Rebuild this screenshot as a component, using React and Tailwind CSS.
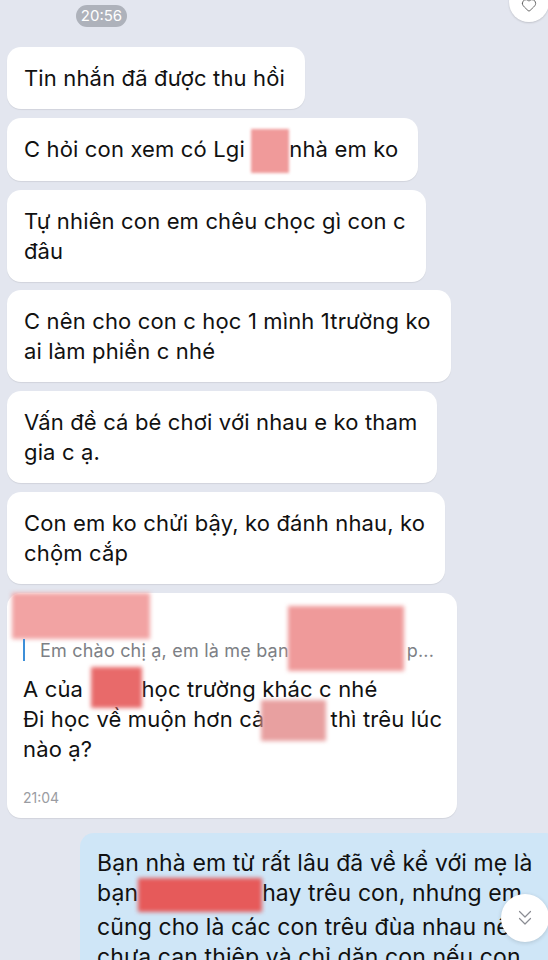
import React from "react";
import { Heart } from "lucide-react";

function Redact({ w, h, className = "", color = "bg-[#f09a9a]" }) {
  return (
    <span
      className={`inline-block align-middle ${color} blur-[1.5px] ${className}`}
      style={{ width: w, height: h }}
    />
  );
}

function Bubble({ children, className = "" }) {
  return (
    <div
      className={`w-fit rounded-[14px] bg-white pl-[17px] pr-[20px] py-[16px] text-[22px] leading-[30px] tracking-[0.15px] text-[#111] shadow-[0_1px_1px_rgba(0,0,0,0.08)] ${className}`}
    >
      {children}
    </div>
  );
}

export default function App() {
  return (
    <div
      className="relative h-[960px] w-[548px] overflow-hidden bg-[#e3e6ef]"
      style={{ fontFamily: "Inter, 'Noto Sans', sans-serif" }}
    >
      {/* heart reaction */}
      <div className="absolute right-[-1px] top-[-18px] flex h-[40px] w-[40px] items-end justify-center rounded-full bg-white pb-[9px] shadow-[0_1px_2px_rgba(0,0,0,0.15)]">
        <Heart size={16} strokeWidth={1.3} className="text-[#555]" />
      </div>

      <div className="flex flex-col px-[7px]">
        <div className="ml-[69px] mt-[5px] flex h-[22px] w-[51px] items-center justify-center rounded-full bg-[#aeb2bb] text-[15px] text-white">
          20:56
        </div>

        <Bubble className="mt-[20px] text-[#5b5b5b]">Tin nhắn đã được thu hồi</Bubble>

        <Bubble className="mt-[9px]">
          C hỏi con xem có Lgi{" "}
          <Redact w={38} h={44} className="-my-[8px]" />
          nhà em ko
        </Bubble>

        <Bubble className="mt-[9px]">
          Tự nhiên con em chêu chọc gì con c
          <br />
          đâu
        </Bubble>

        <Bubble className="mt-[8px]">
          C nên cho con c học 1 mình 1trường ko
          <br />
          ai làm phiền c nhé
        </Bubble>

        <Bubble className="mt-[9px]">
          Vấn đề cá bé chơi với nhau e ko tham
          <br />
          gia c ạ.
        </Bubble>

        <Bubble className="mt-[9px]">
          Con em ko chửi bậy, ko đánh nhau, ko
          <br />
          chộm cắp
        </Bubble>

        {/* reply bubble */}
        <div className="mt-[9px] w-[450px] rounded-[14px] bg-white pb-[10px] pl-[16px] pr-[16px] shadow-[0_1px_1px_rgba(0,0,0,0.08)]">
          <div className="-ml-[11px] h-[46px] w-[138px] bg-[#f2a3a3] blur-[2px]" />
          <div className="relative flex h-[22px] items-center">
            <div className="h-[22px] w-[2px] bg-[#3d8fd8]" />
            <div className="ml-[15px] text-[18px] tracking-[0.2px] text-[#7d7f85] whitespace-nowrap">
              Em chào chị ạ, em là mẹ bạn
              <span className="inline-block w-[118px]" />
              p...
            </div>
            <div className="absolute left-[265px] top-[-33px] h-[65px] w-[116px] bg-[#ef9a9a] blur-[2px]" />
          </div>
          <div className="relative mt-[13px] text-[22px] leading-[30px] tracking-[0.15px] text-[#111] whitespace-nowrap">
            A của <span className="inline-block w-[52px]" />học trường khác c nhé
            <br />
            Đi học về muộn hơn cả<span className="inline-block w-[66px]" />thì trêu lúc
            <br />
            nào ạ?
            <div className="absolute left-[68px] top-[-7px] h-[41px] w-[51px] bg-[#e86a6a] blur-[2px]" />
            <div className="absolute left-[238px] top-[26px] h-[41px] w-[65px] bg-[#e8a0a0] blur-[2px]" />
          </div>
          <div className="mt-[23px] text-[14px] text-[#9a9ca2]">21:04</div>
        </div>

        {/* own message */}
        <div className="ml-[73px] mt-[15px] w-[480px] rounded-[14px] bg-[#cfe6f7] pl-[17px] pt-[15px] text-[23px] leading-[30px] tracking-[0.1px] text-[#111] whitespace-nowrap">
          Bạn nhà em từ rất lâu đã về kể với mẹ là
          <br />
          bạn
          <span className="inline-block w-[124px] h-[34px] align-middle bg-[#e65a5a] blur-[2px]" />
          hay trêu con, nhưng em
          <br />
          cũng cho là các con trêu đùa nhau nên
          <br />
          chưa can thiệp và chỉ dặn con nếu con
          <br />
          có gì
        </div>
      </div>

      {/* scroll down button */}
      <div className="absolute left-[501px] top-[894px] flex h-[48px] w-[48px] items-center justify-center rounded-full bg-white shadow-[0_1px_4px_rgba(0,0,0,0.15)]">
        <svg width="14" height="20" viewBox="0 0 14 20" fill="none" stroke="#8a8c92" strokeWidth="1.2" strokeLinecap="round" strokeLinejoin="round">
          <path d="M1.5 3.5 L7 9 L12.5 3.5" />
          <path d="M1.5 10.5 L7 16 L12.5 10.5" />
        </svg>
      </div>
    </div>
  );
}
